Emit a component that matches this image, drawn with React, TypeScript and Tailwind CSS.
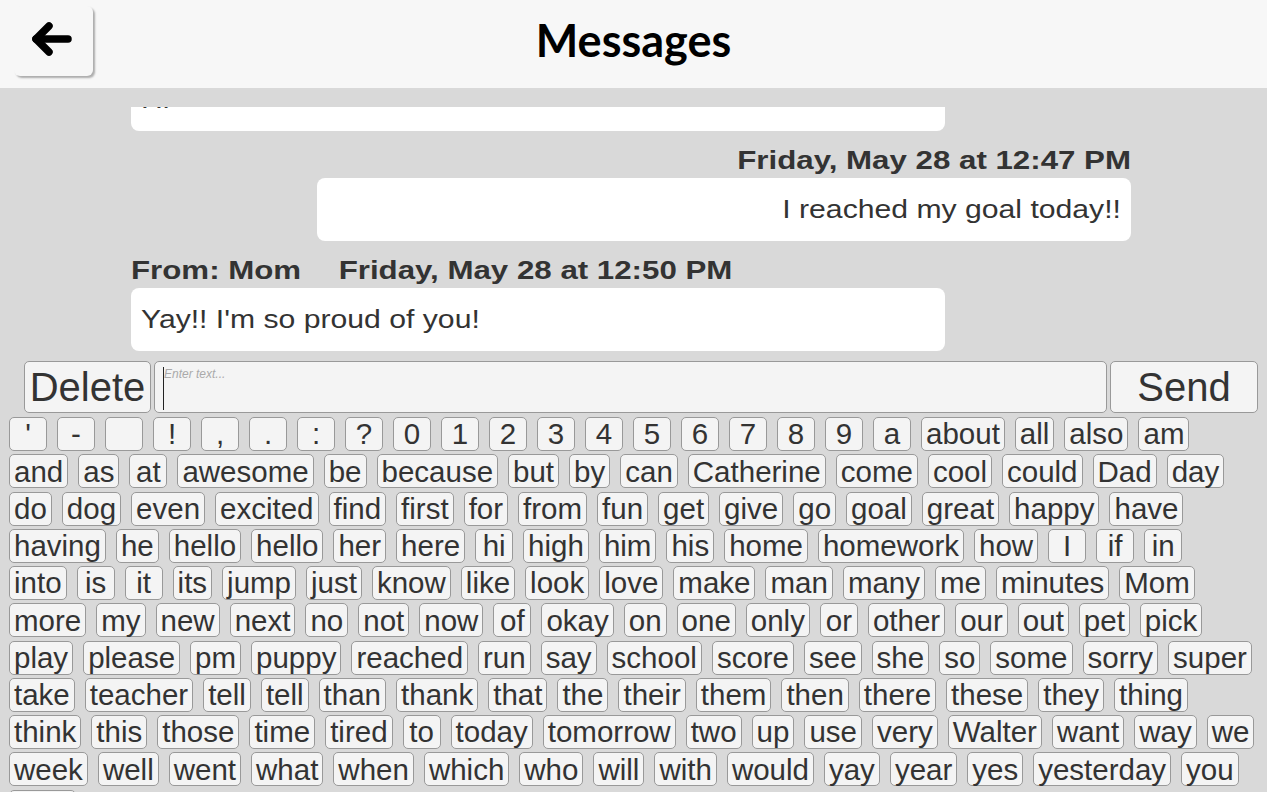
import React from 'react'

const rows: string[][] = [
  ["'", '-', ' ', '!', ',', '.', ':', '?', '0', '1', '2', '3', '4', '5', '6', '7', '8', '9', 'a', 'about', 'all', 'also', 'am'],
  ['and', 'as', 'at', 'awesome', 'be', 'because', 'but', 'by', 'can', 'Catherine', 'come', 'cool', 'could', 'Dad', 'day'],
  ['do', 'dog', 'even', 'excited', 'find', 'first', 'for', 'from', 'fun', 'get', 'give', 'go', 'goal', 'great', 'happy', 'have'],
  ['having', 'he', 'hello', 'hello', 'her', 'here', 'hi', 'high', 'him', 'his', 'home', 'homework', 'how', 'I', 'if', 'in'],
  ['into', 'is', 'it', 'its', 'jump', 'just', 'know', 'like', 'look', 'love', 'make', 'man', 'many', 'me', 'minutes', 'Mom'],
  ['more', 'my', 'new', 'next', 'no', 'not', 'now', 'of', 'okay', 'on', 'one', 'only', 'or', 'other', 'our', 'out', 'pet', 'pick'],
  ['play', 'please', 'pm', 'puppy', 'reached', 'run', 'say', 'school', 'score', 'see', 'she', 'so', 'some', 'sorry', 'super'],
  ['take', 'teacher', 'tell', 'tell', 'than', 'thank', 'that', 'the', 'their', 'them', 'then', 'there', 'these', 'they', 'thing'],
  ['think', 'this', 'those', 'time', 'tired', 'to', 'today', 'tomorrow', 'two', 'up', 'use', 'very', 'Walter', 'want', 'way', 'we'],
  ['week', 'well', 'went', 'what', 'when', 'which', 'who', 'will', 'with', 'would', 'yay', 'year', 'yes', 'yesterday', 'you'],
  ['your'],
]

const arial = { fontFamily: '"Liberation Sans", Arial, sans-serif' }

function Bubble({ text, mine }: { text: string; mine?: boolean }) {
  return (
    <div
      className={`w-[814px] h-[63px] shrink-0 bg-white rounded-[8px] px-[10px] flex items-center text-[26px] text-[#333] ${mine ? 'self-end justify-end' : 'self-start'}`}
    >
      <span className={`inline-block scale-x-[1.16] ${mine ? 'origin-right' : 'origin-left'}`}>{text}</span>
    </div>
  )
}

export default function App() {
  return (
    <div className="w-[1267px] h-[792px] overflow-hidden bg-[#d9d9d9]" style={arial}>
      {/* Header */}
      <header className="relative h-[88px] bg-[#f7f7f7] flex items-center justify-center pb-[6px]">
        <button className="absolute left-[14px] top-[6px] w-[79px] h-[70px] rounded-[6px] bg-[#f7f7f7] shadow-[2px_2px_2px_rgba(0,0,0,0.3)] flex items-center justify-center">
          <svg width="48" height="40" viewBox="0 0 48 40" className="-mt-[2px]">
            <line x1="6" y1="19" x2="38" y2="19" stroke="#000" strokeWidth="7.5" strokeLinecap="round" />
            <polyline points="19,6 6,19 19,32" fill="none" stroke="#000" strokeWidth="7.5" strokeLinecap="round" strokeLinejoin="round" />
          </svg>
        </button>
        <h1 className="text-[45px] font-bold text-black" style={{ fontFamily: 'Lato, "Noto Sans", sans-serif' }}>
          Messages
        </h1>
      </header>

      {/* Conversation */}
      <div className="pt-[19px]">
        <div className="ml-[131px] w-[1000px] h-[244px] overflow-hidden flex flex-col justify-end">
          <Bubble text="Hi" />
          <div className="mt-[14px] mb-[3px] h-[30px] leading-[30px] text-[25px] font-bold text-[#333] text-right shrink-0">
            <span className="inline-block scale-x-[1.25] origin-right">Friday, May 28 at 12:47 PM</span>
          </div>
          <Bubble text="I reached my goal today!!" mine />
          <div className="mt-[14px] mb-[3px] h-[30px] leading-[30px] text-[25px] font-bold text-[#333] shrink-0">
            <span className="inline-flex gap-[30px] scale-x-[1.25] origin-left">
              <span>From: Mom</span>
              <span>Friday, May 28 at 12:50 PM</span>
            </span>
          </div>
          <Bubble text="Yay!! I'm so proud of you!" />
        </div>
      </div>

      {/* Input row */}
      <div className="mt-[10px] ml-[24px] flex gap-[3px] h-[52px]">
        <button className="w-[127px] h-full rounded-[5px] border border-[#999] bg-[#f4f4f4] text-[40px] text-[#333] leading-none flex items-center justify-center">
          Delete
        </button>
        <div className="relative w-[953px] h-full rounded-[5px] border border-[#999] bg-[#f4f4f4]">
          <span className="absolute left-[9px] top-[6px] text-[12px] italic text-[#aaa] leading-none">Enter text...</span>
          <span className="absolute left-[8px] top-[5px] w-px h-[43px] bg-[#222]" />
        </div>
        <button className="w-[148px] h-full rounded-[5px] border border-[#999] bg-[#f4f4f4] text-[40px] text-[#333] leading-none flex items-center justify-center">
          Send
        </button>
      </div>

      {/* Word keyboard */}
      <div className="mt-[4px] ml-[9px] flex flex-col gap-y-[3.25px]">
        {rows.map((row, r) => (
          <div key={r} className="flex gap-x-[10px]">
            {row.map((w, i) => (
              <button
                key={i}
                className="h-[34px] min-w-[38px] px-[4px] rounded-[5px] border border-[#999] bg-[#f4f4f4] text-[29.5px] leading-none text-[#333] flex items-center justify-center whitespace-pre"
              >
                {w}
              </button>
            ))}
          </div>
        ))}
      </div>
    </div>
  )
}
